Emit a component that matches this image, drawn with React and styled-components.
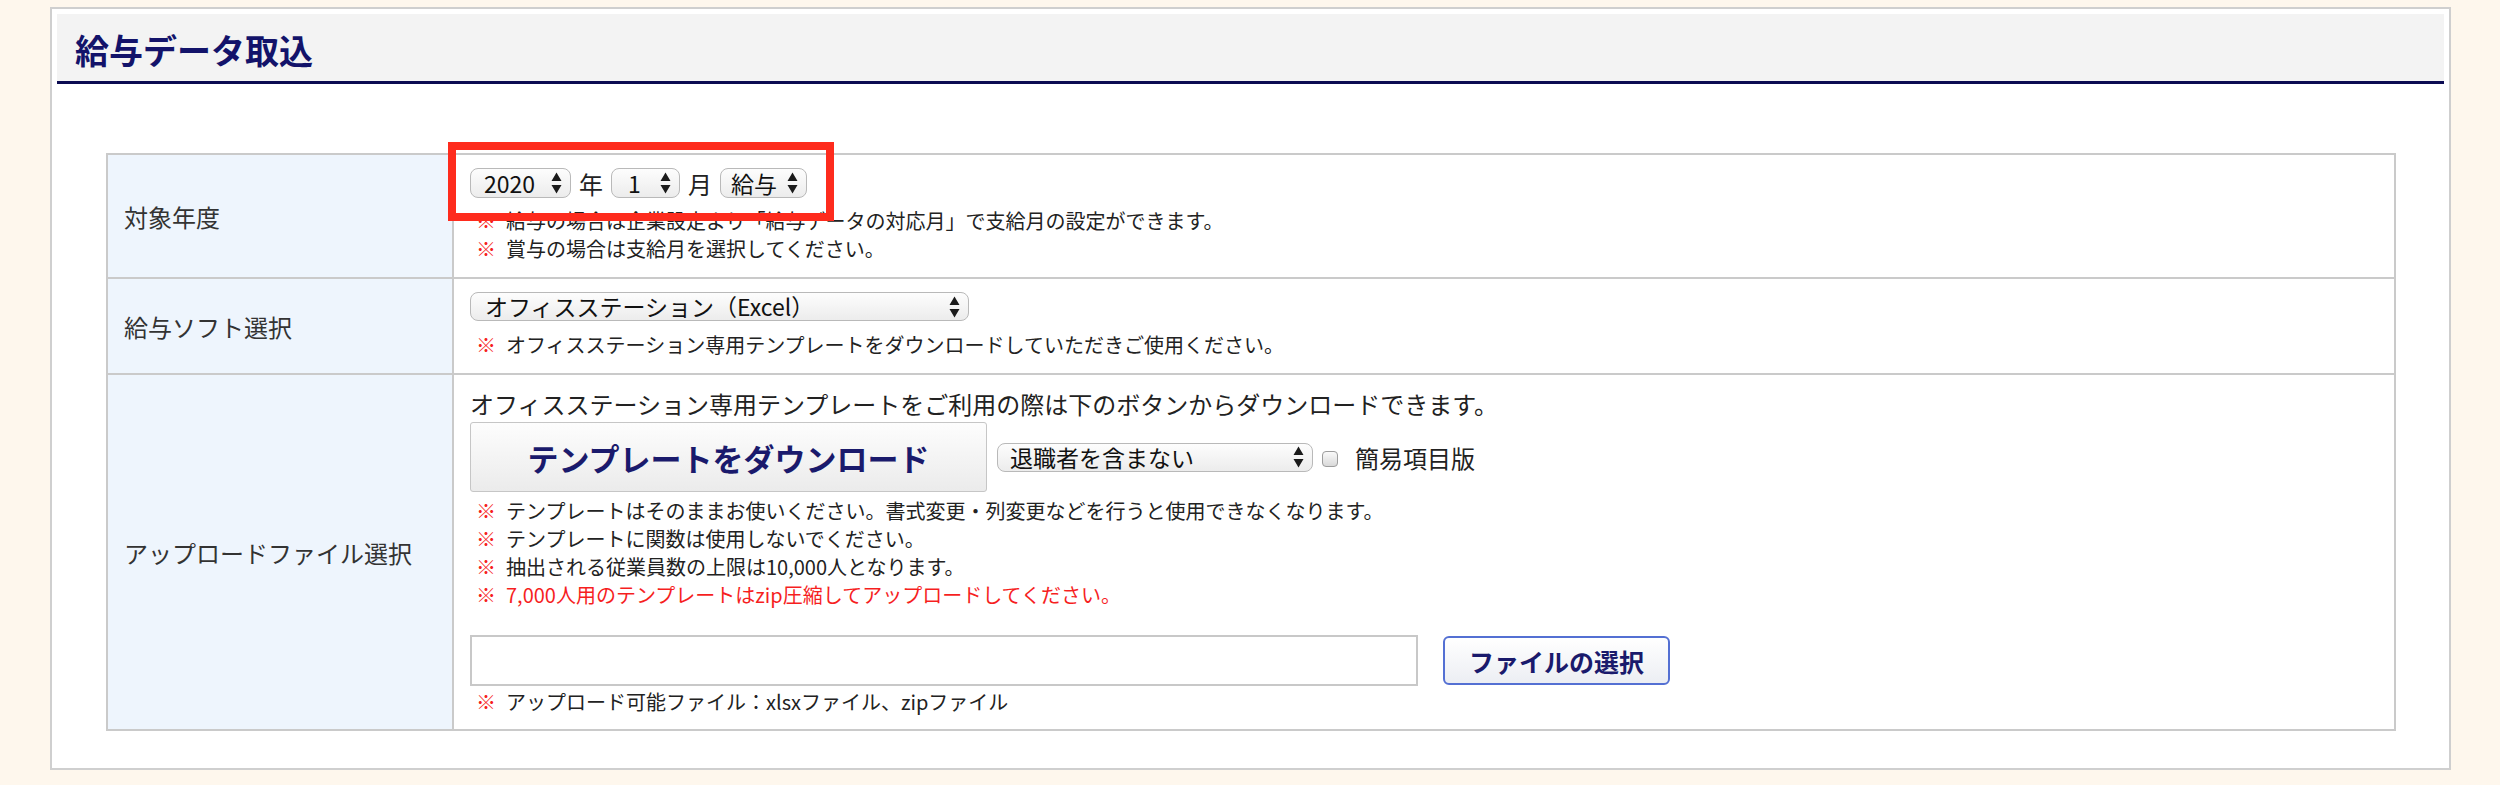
import styled, { createGlobalStyle } from "styled-components";

const GlobalStyle = createGlobalStyle`
  body {
    margin: 0;
    background: #fef7ed;
    font-family: "Noto Sans CJK JP", "Noto Sans", sans-serif;
    color: #222;
  }
`;

const Panel = styled.div`
  margin: 7px 49px 0 50px;
  border: 2px solid #cfcfcf;
  background: #fff;
  padding: 5px;
`;

const Header = styled.div`
  height: 70px;
  box-sizing: border-box;
  background: #f3f3f3;
  border-bottom: 3px solid #0b0b52;
  display: flex;
  align-items: center;
  padding: 4px 0 0 18px;
`;

const Title = styled.h1`
  margin: 0;
  font-size: 34px;
  font-weight: 700;
  color: #13136a;
`;

const Form = styled.table`
  margin: 69px 48px 32px 49px;
  width: calc(100% - 97px);
  border-collapse: collapse;
  border: 2px solid #cacaca;
`;

const Label = styled.th`
  width: 312px;
  padding: 0 16px;
  background: #eef5fd;
  border: 2px solid #cacaca;
  text-align: left;
  vertical-align: middle;
  font-size: 24px;
  font-weight: 400;
  color: #333;
`;

const Cell = styled.td`
  padding: ${(p) => p.$pad || "13px 16px 14px"};
  border: 2px solid #cacaca;
  vertical-align: top;
`;

const SelectRow = styled.div`
  position: relative;
  display: flex;
  align-items: center;
  gap: 8px;
  height: 30px;
`;

const Highlight = styled.div`
  position: absolute;
  left: -22px;
  top: -26px;
  width: 386px;
  height: 79px;
  border: 8px solid #fe2b1d;
  box-sizing: border-box;
  pointer-events: none;
`;

const FakeSelect = styled.div`
  width: ${(p) => p.$w}px;
  height: ${(p) => p.$h || 30}px;
  box-sizing: border-box;
  display: flex;
  align-items: center;
  justify-content: space-between;
  padding: 0 8px 0 ${(p) => p.$pl || 12}px;
  border: 1px solid #b9b9b9;
  border-radius: 8px;
  background: linear-gradient(#fdfdfd, #ececec);
  font-size: 23px;
  color: #111;
  line-height: 1;
  white-space: nowrap;
  flex: none;
`;

const Unit = styled.span`
  font-size: 24px;
  color: #222;
`;

const Notes = styled.div`
  margin-top: ${(p) => p.$mt || 9}px;
  padding-left: 6px;
`;

const Note = styled.div`
  font-size: 20px;
  line-height: 28px;
  color: ${(p) => (p.$red ? "#f61f1f" : "#222")};
  white-space: nowrap;
`;

const Mark = styled.span`
  color: #f61f1f;
  font-weight: 700;
  margin-right: 10px;
`;

const Intro = styled.div`
  font-size: 24px;
  line-height: 30px;
`;

const DownloadLine = styled.div`
  display: flex;
  align-items: center;
  gap: 10px;
  margin-top: 3px;
`;

const DownloadButton = styled.button`
  width: 517px;
  height: 70px;
  border: 1px solid #c6c6c6;
  border-radius: 3px;
  background: linear-gradient(#fdfdfd, #ebebeb);
  font-family: inherit;
  font-size: 31px;
  font-weight: 700;
  color: #1a1a6c;
  padding: 0;
`;

const Checkbox = styled.span`
  width: 16px;
  height: 16px;
  margin: 4px 7px 0 -1px;
  box-sizing: border-box;
  border: 1px solid #9d9d9d;
  border-radius: 4px;
  background: linear-gradient(#fafafa, #d9d9d9);
  flex: none;
`;

const CheckLabel = styled.span`
  font-size: 24px;
`;

const FileLine = styled.div`
  display: flex;
  align-items: center;
  gap: 25px;
  margin-top: 26px;
`;

const FileField = styled.div`
  width: 948px;
  height: 51px;
  box-sizing: border-box;
  border: 2px solid #c8c8c8;
  background: #fff;
`;

const FileButton = styled.button`
  width: 227px;
  height: 49px;
  border: 2px solid #5470d3;
  border-radius: 6px;
  background: linear-gradient(#ffffff, #eceef3);
  font-family: inherit;
  font-size: 25px;
  font-weight: 700;
  color: #1a1a6c;
  padding: 0;
`;

const Arrows = () => (
  <svg width="11" height="22" viewBox="0 0 11 22">
    <path d="M5.5 0.5 L10.5 9 H0.5 Z M5.5 21.5 L10.5 13 H0.5 Z" fill="#1b1b1b" />
  </svg>
);

const Select = ({ w, h, pl, children }) => (
  <FakeSelect $w={w} $h={h} $pl={pl}>
    <span>{children}</span>
    <Arrows />
  </FakeSelect>
);

const App = () => {
  return (
    <>
      <GlobalStyle />
      <Panel>
        <Header>
          <Title>給与データ取込</Title>
        </Header>
        <Form>
          <tbody>
            <tr>
              <Label>対象年度</Label>
              <Cell>
                <SelectRow>
                  <Select w={101} pl={13}>2020</Select>
                  <Unit>年</Unit>
                  <Select w={69} pl={16}>1</Select>
                  <Unit>月</Unit>
                  <Select w={87} pl={10}>給与</Select>
                  <Highlight />
                </SelectRow>
                <Notes>
                  <Note><Mark>※</Mark>給与の場合は企業設定より「給与データの対応月」で支給月の設定ができます。</Note>
                  <Note><Mark>※</Mark>賞与の場合は支給月を選択してください。</Note>
                </Notes>
              </Cell>
            </tr>
            <tr>
              <Label>給与ソフト選択</Label>
              <Cell>
                <Select w={499} h={29} pl={14}>オフィスステーション（Excel）</Select>
                <Notes $mt={10}>
                  <Note><Mark>※</Mark>オフィスステーション専用テンプレートをダウンロードしていただきご使用ください。</Note>
                </Notes>
              </Cell>
            </tr>
            <tr>
              <Label>アップロードファイル選択</Label>
              <Cell $pad="14px 16px 13px">
                <Intro>オフィスステーション専用テンプレートをご利用の際は下のボタンからダウンロードできます。</Intro>
                <DownloadLine>
                  <DownloadButton>テンプレートをダウンロード</DownloadButton>
                  <Select w={316} h={29} pl={12}>退職者を含まない</Select>
                  <Checkbox />
                  <CheckLabel>簡易項目版</CheckLabel>
                </DownloadLine>
                <Notes $mt={5}>
                  <Note><Mark>※</Mark>テンプレートはそのままお使いください。書式変更・列変更などを行うと使用できなくなります。</Note>
                  <Note><Mark>※</Mark>テンプレートに関数は使用しないでください。</Note>
                  <Note><Mark>※</Mark>抽出される従業員数の上限は10,000人となります。</Note>
                  <Note $red><Mark>※</Mark>7,000人用のテンプレートはzip圧縮してアップロードしてください。</Note>
                </Notes>
                <FileLine>
                  <FileField />
                  <FileButton>ファイルの選択</FileButton>
                </FileLine>
                <Notes $mt={2}>
                  <Note><Mark>※</Mark>アップロード可能ファイル：xlsxファイル、zipファイル</Note>
                </Notes>
              </Cell>
            </tr>
          </tbody>
        </Form>
      </Panel>
    </>
  );
};

export default App;
